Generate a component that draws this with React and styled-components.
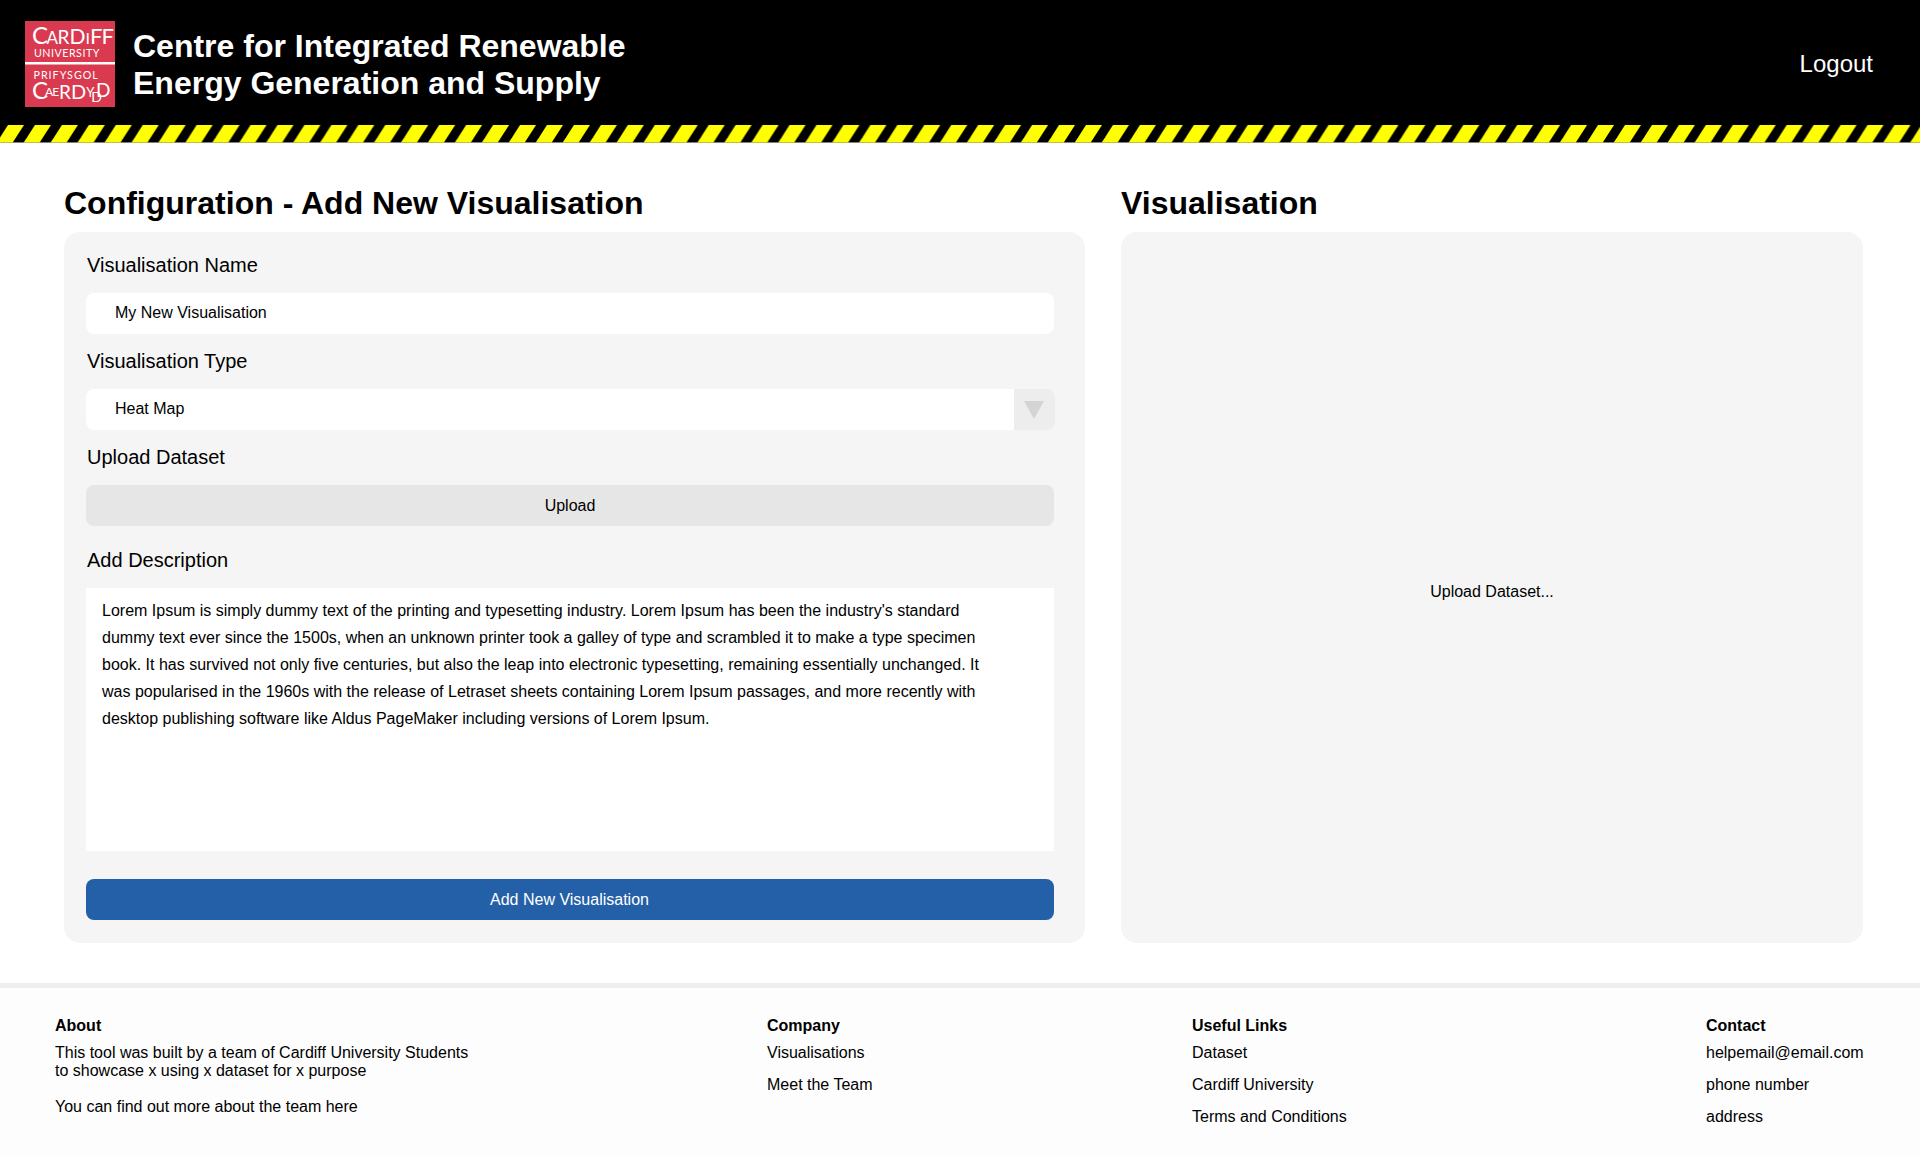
import React from "react";
import styled, { createGlobalStyle } from "styled-components";

const Global = createGlobalStyle`
  html, body { margin: 0; padding: 0; background: #fff; }
  body { font-family: "Liberation Sans", Arial, sans-serif; color: #000; }
  * { box-sizing: border-box; }
`;
const Page = styled.div`display:flex;flex-direction:column;min-height:1157px;`;
const Header = styled.header`
  height:125px;background:#000;display:flex;align-items:flex-start;justify-content:space-between;
  padding:21px 47px 0 25px;
`;
const Brand = styled.div`display:flex;align-items:flex-start;gap:18px;`;
const Title = styled.h1`margin:7px 0 0;font-size:32px;line-height:37px;font-weight:700;color:#fff;`;
const Logout = styled.a`color:#fff;font-size:24px;line-height:28px;margin-top:29px;`;
const StripeSvg = styled.svg`display:block;width:100%;height:18px;`;
const Main = styled.main`display:flex;gap:36px;padding:0 57px 0 64px;margin-top:41px;`;
const LeftCol = styled.section`width:1021px;display:flex;flex-direction:column;`;
const RightCol = styled.section`flex:1;display:flex;flex-direction:column;`;
const Heading = styled.h2`margin:0 0 10px;font-size:32px;line-height:38px;font-weight:700;`;
const Panel = styled.div`
  height:711px;background:#f5f5f5;border-radius:16px;padding:21px 31px 23px 22px;display:flex;flex-direction:column;
`;
const Label = styled.label`font-size:20px;line-height:24px;margin:0 0 16px 1px;`;
const Field = styled.div`
  height:41px;background:#fff;border-radius:8px;font-size:16px;line-height:39px;padding-left:29px;margin-bottom:${p=>p.$mb}px;position:relative;overflow:hidden;
`;
const Caret = styled.span`
  position:absolute;right:0;top:0;bottom:0;width:41px;background:#ededed;display:flex;align-items:center;justify-content:center;padding-right:1px;
  &::before{content:"";border-left:10px solid transparent;border-right:10px solid transparent;border-top:18px solid #d4d4d4;}
`;
const SelectWrap = styled.div`position:relative;margin-bottom:15px;margin-right:-1px;`;
const Upload = styled.button`
  display:block;width:100%;height:41px;border:0;border-radius:8px;background:#e6e6e6;font:16px/41px "Liberation Sans",Arial,sans-serif;color:#000;margin-bottom:22px;padding:0;
`;
const Description = styled.div`
  height:263px;background:#fff;padding:9px 65px 0 16px;font-size:16px;line-height:27px;margin-bottom:28px;
`;
const Submit = styled(Upload)`background:#2460a7;color:#fff;margin-bottom:0;padding:0 1px 0 0;`;
const Placeholder = styled(Panel)`align-items:center;justify-content:center;font-size:16px;padding:9px 0 0;line-height:18px;`;
const Footer = styled.footer`
  margin-top:40px;flex:1;background:#fdfdfd;border-top:5px solid #eeeeee;padding:29px 0 0 55px;display:grid;grid-template-columns:712px 425px 514px auto;font-size:16px;align-content:start;
`;
const FootCol = styled.div`display:flex;flex-direction:column;align-items:flex-start;`;
const FootHead = styled.div`font-weight:700;line-height:18px;margin-bottom:9px;`;
const FootLink = styled.div`line-height:18px;margin-bottom:14px;`;
const FootText = styled.div`line-height:18px;margin-bottom:18px;`;

function Logo() {
  const t = { fill: "#fff", fontFamily: "Lato, sans-serif" };
  return (
    <svg width="90" height="86" viewBox="0 0 90 86" style={{ display: "block" }}>
      <rect width="90" height="86" fill="#d93a50" />
      <rect y="41" width="90" height="2.5" fill="#fff" />
      <text x="7" y="23" {...t} fontSize="17">
        <tspan fontSize="24">C</tspan><tspan dx="-1.5">A</tspan><tspan dx="-0.5" fontSize="19">R</tspan><tspan fontSize="21">D</tspan><tspan fontSize="16">I</tspan><tspan fontSize="22">F</tspan><tspan dx="-1" fontSize="22">F</tspan>
      </text>
      <text x="9" y="35.5" fontSize="10.7" letterSpacing="0.5" {...t}>UNIVERSITY</text>
      <text x="8.5" y="58" fontSize="10.7" letterSpacing="1" {...t}>PRIFYSGOL</text>
      <text x="7" y="78" {...t} fontSize="16">
        <tspan fontSize="24">C</tspan><tspan dx="-3" dy="-3" fontSize="12">A</tspan><tspan dx="-1" fontSize="12">E</tspan><tspan dy="3" fontSize="19">R</tspan><tspan fontSize="20">D</tspan><tspan dy="-2" fontSize="13">Y</tspan><tspan dx="-3" dy="5" fontSize="14">D</tspan><tspan dx="-6" dy="-5" fontSize="19">D</tspan>
      </text>
    </svg>
  );
}

function Stripes() {
  return (
    <StripeSvg aria-hidden="true">
      <defs>
        <pattern id="hazard" width="26.95" height="18" patternUnits="userSpaceOnUse">
          <rect width="27" height="18" fill="#fff" />
          <rect width="27" height="17.5" fill="#000" />
          <polygon points="8,0 24,0 12.7,17.5 -3.3,17.5" fill="#ffff00" />
          <polygon points="34.95,0 50.95,0 39.65,17.5 23.65,17.5" fill="#ffff00" />
        </pattern>
      </defs>
      <rect width="100%" height="18" fill="url(#hazard)" />
    </StripeSvg>
  );
}

export default function App() {
  return (
    <Page>
      <Global />
      <Header>
        <Brand>
          <Logo />
          <Title>Centre for Integrated Renewable<br />Energy Generation and Supply</Title>
        </Brand>
        <Logout>Logout</Logout>
      </Header>
      <Stripes />
      <Main>
        <LeftCol>
          <Heading>Configuration - Add New Visualisation</Heading>
          <Panel>
            <Label>Visualisation Name</Label>
            <Field $mb={15}>My New Visualisation</Field>
            <Label>Visualisation Type</Label>
            <SelectWrap>
              <Field $mb={0}>Heat Map<Caret /></Field>
            </SelectWrap>
            <Label>Upload Dataset</Label>
            <Upload>Upload</Upload>
            <Label>Add Description</Label>
            <Description>
              Lorem Ipsum is simply dummy text of the printing and typesetting industry. Lorem Ipsum has been the industry's standard dummy text ever since the 1500s, when an unknown printer took a galley of type and scrambled it to make a type specimen book. It has survived not only five centuries, but also the leap into electronic typesetting, remaining essentially unchanged. It was popularised in the 1960s with the release of Letraset sheets containing Lorem Ipsum passages, and more recently with desktop publishing software like Aldus PageMaker including versions of Lorem Ipsum.
            </Description>
            <Submit>Add New Visualisation</Submit>
          </Panel>
        </LeftCol>
        <RightCol>
          <Heading>Visualisation</Heading>
          <Placeholder>Upload Dataset...</Placeholder>
        </RightCol>
      </Main>
      <Footer>
        <FootCol>
          <FootHead>About</FootHead>
          <FootText>This tool was built by a team of Cardiff University Students<br />to showcase x using x dataset for x purpose</FootText>
          <FootText>You can find out more about the team here</FootText>
        </FootCol>
        <FootCol>
          <FootHead>Company</FootHead>
          <FootLink>Visualisations</FootLink>
          <FootLink>Meet the Team</FootLink>
        </FootCol>
        <FootCol>
          <FootHead>Useful Links</FootHead>
          <FootLink>Dataset</FootLink>
          <FootLink>Cardiff University</FootLink>
          <FootLink>Terms and Conditions</FootLink>
        </FootCol>
        <FootCol>
          <FootHead>Contact</FootHead>
          <FootLink>helpemail@email.com</FootLink>
          <FootLink>phone number</FootLink>
          <FootLink>address</FootLink>
        </FootCol>
      </Footer>
    </Page>
  );
}
